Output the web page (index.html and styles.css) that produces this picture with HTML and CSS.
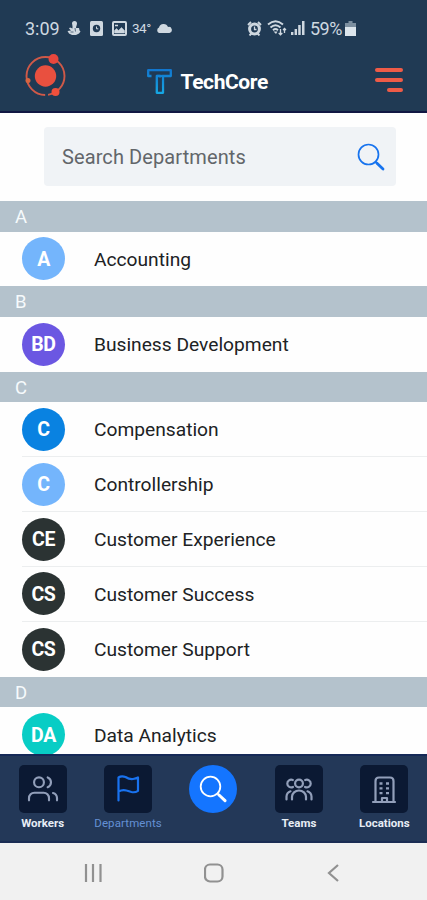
FILE: index.html
```html
<!DOCTYPE html>
<html lang="en">
<head>
<meta charset="utf-8">
<title>TechCore Departments</title>
<link rel="stylesheet" href="styles.css">
</head>
<body>
<div class="phone">
  <header class="header">
    <div class="status">
      <div class="status-left">
        <span class="time">3:09</span>
        <svg class="s-snow" width="14" height="16" viewBox="0 0 14 16" fill="#cfd8e0"><circle cx="7.500" cy="3.500" r="2.500"/><path d="M5.500 5h4l-.5 3h3l.5 2.500 1 1-1.500 2-3 1.500H5L2 13.500.5 11l3.500-.5-2-2 1-1 2.500 1z"/><path d="M3.500 12h3M8 8l.5 3.500" stroke="#203a54" stroke-width=".7"/></svg>
        <svg class="s-clock" width="13" height="15" viewBox="0 0 13 15"><rect width="13" height="15" rx="1.500" fill="#cfd8e0"/><circle cx="6.500" cy="7.500" r="3.700" fill="#203a54"/><path d="M6.500 5.500v2.300H8.300" stroke="#cfd8e0" fill="none"/></svg>
        <svg class="s-pic" width="15" height="15" viewBox="0 0 15 15" fill="none" stroke="#cfd8e0" stroke-width="2"><rect x="1" y="1" width="13" height="13" rx="1"/><path d="M2.500 12V9.500l2-2 2 2 3-3 3 3V12z" fill="#cfd8e0" stroke-width=".5"/><path d="M3 4.500h3" stroke-width="1.500"/></svg>
        <span class="temp">34°</span>
        <svg class="s-cloud" width="16" height="10" viewBox="0 0 16 10" fill="#cfd8e0"><path d="M3 10a3 3 0 0 1 0-5.500A4.700 4.700 0 0 1 12 4a3 3 0 0 1 1.500 6z"/></svg>
      </div>
      <div class="status-right">
        <svg width="15" height="15" viewBox="0 0 15 15" fill="none" stroke="#cfd8e0"><circle cx="7.500" cy="8" r="4.900" stroke-width="3"/><path d="M7.500 5.500V8.500H9.500" stroke-width="1.300"/><path d="M1 4l3-3M14 4l-3-3M2.500 14.500l2-2M12.500 14.500l-2-2" stroke-width="1.900"/></svg>
        <svg class="s-wifi" width="20" height="16" viewBox="0 0 20 16" fill="none" stroke="#cfd8e0" stroke-width="1.900"><path d="M1 4.500Q8.500-2 16 4.500M3.500 7.500Q8.500 3 13.500 7.500M6 10.200Q8.500 8 11 10.200"/><path d="M9 14l-2.500-2.500h4z" fill="#cfd8e0" stroke="none"/><path d="M13.500 9v5.500M11.700 13l1.800 1.800 1.800-1.800M17.500 13V8.500M16 10l1.500-1.500L19 10" stroke-width="1.300"/></svg>
        <svg class="s-signal" width="14" height="14" viewBox="0 0 14 14" fill="#cfd8e0"><path d="M0 11h2.400v3H0zM3.600 8H6v6H3.600zM7.200 4h2.500v10H7.200zM11 0h2.500v14H11z"/></svg>
        <span class="battery-text">59%</span>
        <svg class="s-battery" width="11" height="15" viewBox="0 0 11 15"><path d="M3.500 0h4v2H11v5H0V2h3.500z" fill="#7c8fa0"/><path d="M0 6h11v9H0z" fill="#dce5ec"/></svg>
      </div>
    </div>
    <div class="brand-row">
      <svg class="orbit" width="44" height="44" viewBox="0 0 44 44"><circle cx="21.500" cy="22" r="19" fill="none" stroke="#cf5948" stroke-width="1.900" stroke-dasharray="27 3 90"/><circle cx="21.500" cy="22" r="10.700" fill="#e9503f"/><circle cx="29.500" cy="5" r="5" fill="#e9473d"/><circle cx="31.500" cy="38" r="4" fill="#f0503c"/><circle cx="4" cy="26.500" r="2.500" fill="#d8643f"/></svg>
      <div class="brand">
        <svg width="25" height="25" viewBox="0 0 25 25" fill="none" stroke-width="2.300" stroke-linejoin="round"><defs><linearGradient id="g" gradientUnits="userSpaceOnUse" x1="0" x2="0" y1="0" y2="25"><stop offset="0" stop-color="#1175ce"/><stop offset="1" stop-color="#16a9e5"/></linearGradient></defs><path d="M4.500 7H1.200V1.200h22.600V7H16v16.800H9.800V7H13v12" stroke="url(#g)"/><path d="M10 7h6" stroke="url(#g)"/><path d="M13 8.500v13" stroke="#203a54" stroke-width="3.500"/></svg>
        <span>TechCore</span>
      </div>
      <div class="menu"><i></i><i></i><i class="short"></i></div>
    </div>
  </header>
  <main class="content">
    <div class="search">
      <span>Search Departments</span>
      <svg width="28" height="28" viewBox="0 0 28 28" fill="none" stroke="#1773ee" stroke-linecap="round"><circle cx="11.500" cy="11.500" r="10" stroke-width="1.700"/><path d="M18.800 19l1.500 1.500" stroke-width="2"/><path d="M20 20.300l6 5.700" stroke-width="2.800"/></svg>
    </div>
    <h2>A</h2>
    <ul><li><b class="avatar sky">A</b><span>Accounting</span></li></ul>
    <h2>B</h2>
    <ul><li><b class="avatar violet">BD</b><span>Business Development</span></li></ul>
    <h2>C</h2>
    <ul>
      <li><b class="avatar blue">C</b><span>Compensation</span></li>
      <li><b class="avatar sky">C</b><span>Controllership</span></li>
      <li><b class="avatar dark">CE</b><span>Customer Experience</span></li>
      <li><b class="avatar dark">CS</b><span>Customer Success</span></li>
      <li><b class="avatar dark">CS</b><span>Customer Support</span></li>
    </ul>
    <h2>D</h2>
    <ul><li><b class="avatar teal">DA</b><span>Data Analytics</span></li></ul>
  </main>
  <nav class="tabs">
    <a class="tab"><span class="tile"><svg width="32" height="32" viewBox="0 0 24 24"><circle cx="9" cy="7" r="3.700"/><path d="M1.500 20.500v-1.700a4 4 0 0 1 4-4h7a4 4 0 0 1 4 4v1.700M15.500 3.300a4 4 0 0 1 0 7.400M22.500 20.500v-1.700a4 4 0 0 0-3-3.800"/></svg></span><span>Workers</span></a>
    <a class="tab active"><span class="tile"><svg width="32" height="32" viewBox="0 0 32 32"><path d="M6.500 27.500V4.500q3-2 7-.5 4 2.500 7.500 2 3-.3 5-1.500v13.300q-3 2-6.500 1.200l-5-1.500q-4-1.300-8 1"/></svg></span><span>Departments</span></a>
    <a class="tab"><span class="tile round"><svg width="28" height="28" viewBox="0 0 28 28"><circle cx="11.500" cy="11.500" r="9.800"/><path d="M19 19l1.500 1.500"/><path class="handle" d="M20 20l6 5.700"/></svg></span></a>
    <a class="tab"><span class="tile"><svg width="30" height="30" viewBox="0 0 30 30"><circle cx="15" cy="9.500" r="3.900"/><path d="M8 25.500v-2.700a7 6.300 0 0 1 14 0v2.700M8.800 6a3.900 3.900 0 1 0 .2 7M21.200 6a3.900 3.900 0 1 1-.2 7M2.500 25.500v-3q.3-4 4-5.200M27.500 25.500v-3q-.3-4-4-5.200"/></svg></span><span>Teams</span></a>
    <a class="tab"><span class="tile"><svg width="28" height="30" viewBox="0 0 28 30"><path d="M3 28h22M5.500 28V7q0-3.500 3.500-3.500h11q3.500 0 3.500 3.500v21M12 28v-4h5v4"/><path class="windows" d="M9.500 9.500h3M16 9.500h3M9.500 14.300h3M16 14.300h3M9.500 19.200h3M16 19.200h3"/></svg></span><span>Locations</span></a>
  </nav>
  <footer class="system">
    <svg width="20" height="20" viewBox="0 0 20 20"><path d="M3 1v18M10 1v18M17.500 1v18"/></svg>
    <svg width="20" height="20" viewBox="0 0 20 20"><rect x="1" y="1.500" width="17.500" height="17" rx="5"/></svg>
    <svg width="20" height="20" viewBox="0 0 20 20"><path d="M14 2L5 10l9 8"/></svg>
  </footer>
</div>
</body>
</html>
```
FILE: styles.css
```css
* { box-sizing: border-box; }
body { margin: 0; font-family: Roboto, "Liberation Sans", sans-serif; background: #fff; }
svg { display: block; flex: none; }
.phone { width: 427px; height: 900px; display: flex; flex-direction: column; overflow: hidden; }
.header { height: 113px; flex: none; background: #203a54; border-bottom: 2px solid #111743; padding-top: 18px; }
.status { height: 20px; display: flex; justify-content: space-between; padding: 0 71px 0 25px; color: #cfd8e0; }
.status-left, .status-right { display: flex; align-items: center; white-space: nowrap; }
.time { width: 34px; font-size: 18px; }
.s-snow { margin-left: 8px; }
.s-clock { margin-left: 9px; }
.s-pic { margin-left: 9px; }
.temp { width: 18px; margin-left: 5px; font-size: 13.500px; letter-spacing: -0.5px; }
.s-cloud { margin-left: 6px; }
.s-wifi { margin-left: 5px; }
.s-signal { margin-left: 4px; }
.battery-text { width: 33px; margin-left: 5px; font-size: 18px; letter-spacing: -0.5px; }
.s-battery { margin-left: 2px; }
.brand-row { display: flex; justify-content: space-between; padding: 0 24px 0 24px; margin-top: 16px; height: 44px; }
.brand { display: flex; align-items: center; gap: 9px; height: 54px; color: #fff; font-size: 21px; font-weight: 700; margin-left: -28px; }
.brand span { width: 88px; letter-spacing: -0.4px; padding-top: 2px; }
.menu { width: 28px; padding-top: 14px; display: flex; flex-direction: column; align-items: flex-end; gap: 6px; }
.menu i { width: 28px; height: 4px; border-radius: 2px; background: #ee5b47; }
.menu .short { width: 16px; }
.content { flex: 1; min-height: 0; overflow: hidden; background: #fefefe; }
.search { width: 352px; height: 59px; margin: 14px 0 15px 44px; border-radius: 4px; background: #f0f3f6; display: flex; justify-content: space-between; align-items: center; padding: 0 11px 0 18px; color: #62666a; font-size: 20px; letter-spacing: 0.1px; }
h2 { margin: 0; height: 30.500px; background: #b4c2cc; color: #f6fafc; font-size: 18.500px; font-weight: 400; line-height: 32px; padding-left: 15px; }
ul { margin: 0; padding: 0 0 0 22px; list-style: none; }
li { height: 54.900px; display: flex; align-items: center; gap: 29px; font-size: 19.200px; color: #202224; border-bottom: 1px solid #eceeef; }
li span { padding-top: 1px; }
li:last-child { border-bottom: 0; }
.avatar { width: 43px; height: 43px; border-radius: 50%; display: flex; align-items: center; justify-content: center; color: #fff; font-size: 19.500px; letter-spacing: -0.4px; padding-top: 1px; }
.sky { background: #74b5fc; }
.violet { background: #6b57e2; }
.blue { background: #0982e1; }
.dark { background: #2b3333; }
.teal { background: #08cdc5; }
.tabs { height: 89px; flex: none; display: grid; grid-template-columns: repeat(5, 1fr); background: #233858; border-top: 2px solid #152957; border-bottom: 2px solid #1b2d54; padding-top: 9px; }
.tab { display: flex; flex-direction: column; align-items: center; gap: 3px; color: #e7edf5; font-size: 11.500px; font-weight: 700; line-height: 14px; }
.tile { width: 48px; height: 48px; border-radius: 5px; background: #0b1933; display: flex; align-items: center; justify-content: center; }
.tile svg { fill: none; stroke: #929fba; stroke-width: 1.600; stroke-linecap: round; stroke-linejoin: round; }
.tab:nth-child(n+4) .tile svg { stroke-width: 2.200; }
.tile .windows { stroke-linecap: butt; stroke-width: 2.300; }
.active { color: #6490d4; font-weight: 400; letter-spacing: 0.1px; }
.tab.active .tile svg { stroke: #1972ef; stroke-width: 2.200; }
.tile.round { border-radius: 50%; background: #1475ff; }
.tile.round svg { stroke: #fff; stroke-width: 1.800; }
.tile.round .handle { stroke-width: 3; }
.system { height: 57px; flex: none; background: #f1f1f1; display: flex; justify-content: space-between; align-items: center; padding: 2px 83px 0; }
.system svg { fill: none; stroke: #919191; stroke-width: 2.200; }
```
